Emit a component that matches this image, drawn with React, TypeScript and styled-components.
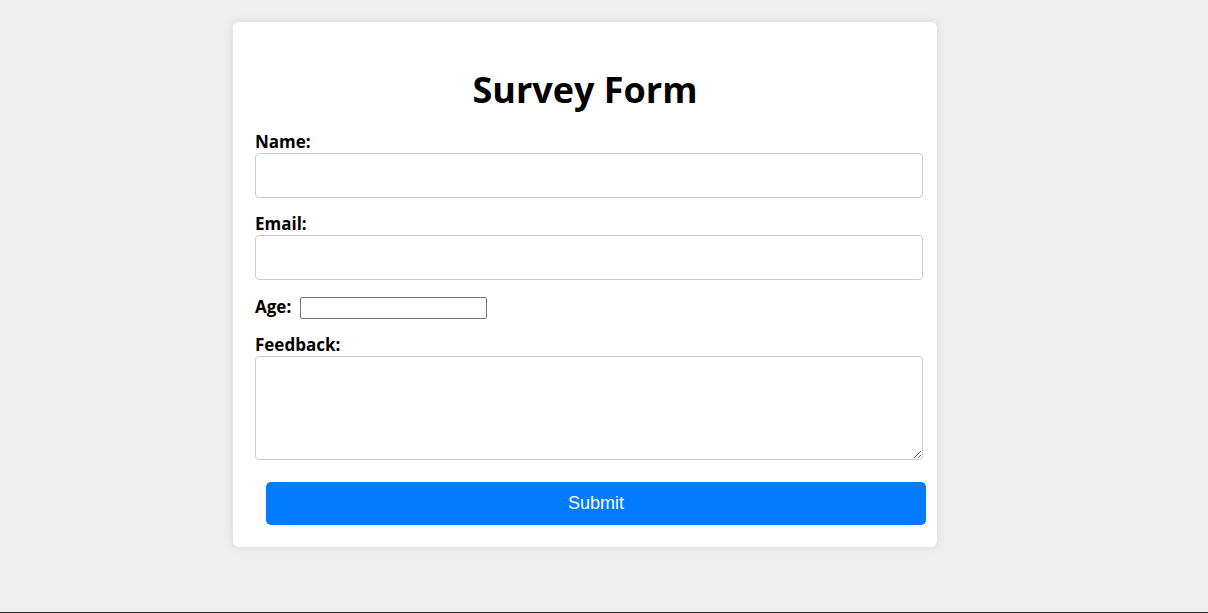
import React from "react";
import styled, { createGlobalStyle } from "styled-components";

const GlobalStyle = createGlobalStyle`
  html, body {
    margin: 0;
    padding: 0;
    background: #efefef;
  }
  #root {
    min-height: 613px;
    box-sizing: border-box;
    border-bottom: 1px solid #2b2b2b;
  }
`;

const Page = styled.div`
  padding-top: 22px;
  font-family: "Open Sans", "Liberation Sans", sans-serif;
  color: #000;
`;

const Card = styled.form`
  box-sizing: border-box;
  width: 704px;
  margin-left: 233px;
  padding: 20px 14px 22px 22px;
  background: #fff;
  border-radius: 6px;
  box-shadow: 0 0 10px rgba(0, 0, 0, 0.1);
`;

const Title = styled.h1`
  width: 660px;
  margin: 23px 0 16px;
  text-align: center;
  font-family: "Open Sans", sans-serif;
  font-size: 36px;
  font-weight: 700;
  line-height: 49px;
`;

const Label = styled.label`
  display: block;
  font-size: 17px;
  font-weight: 700;
  line-height: 23px;
`;

const Field = styled.div<{ $gap?: number }>`
  margin-top: ${(p) => p.$gap ?? 0}px;
`;

const TextInput = styled.input`
  display: block;
  box-sizing: border-box;
  width: 100%;
  height: 45px;
  padding: 8px;
  border: 1px solid #ccc;
  border-radius: 4px;
  font-size: 16px;
  background: #fff;
`;

const InlineRow = styled.div`
  display: flex;
  align-items: center;
  gap: 9px;
  margin-top: 15px;
  height: 23px;
`;

const AgeInput = styled.input`
  box-sizing: border-box;
  width: 187px;
  height: 22px;
  padding: 1px 2px;
  border: 1px solid #767676;
  border-radius: 2px;
  font-family: "Liberation Sans", Arial, sans-serif;
  font-size: 13px;
  background: #fff;
  margin-top: 2px;
`;

const TextArea = styled.textarea`
  display: block;
  box-sizing: border-box;
  width: 100%;
  height: 104px;
  padding: 8px;
  border: 1px solid #ccc;
  border-radius: 4px;
  resize: vertical;
  font-size: 16px;
`;

const SubmitButton = styled.button`
  display: block;
  box-sizing: border-box;
  width: 660px;
  height: 43px;
  margin: 22px 0 0 11px;
  border: none;
  border-radius: 5px;
  background: #007bff;
  color: #fff;
  font-family: "Liberation Sans", Arial, sans-serif;
  font-size: 18px;
  cursor: pointer;
`;

export default function App() {
  return (
    <>
      <GlobalStyle />
      <Page>
        <Card onSubmit={(e) => e.preventDefault()}>
          <Title>Survey Form</Title>
          <Field>
            <Label htmlFor="name">Name:</Label>
            <TextInput id="name" type="text" />
          </Field>
          <Field $gap={14}>
            <Label htmlFor="email">Email:</Label>
            <TextInput id="email" type="email" />
          </Field>
          <InlineRow>
            <Label htmlFor="age">Age:</Label>
            <AgeInput id="age" type="number" />
          </InlineRow>
          <Field $gap={15}>
            <Label htmlFor="feedback">Feedback:</Label>
            <TextArea id="feedback" />
          </Field>
          <SubmitButton type="submit">Submit</SubmitButton>
        </Card>
      </Page>
    </>
  );
}
